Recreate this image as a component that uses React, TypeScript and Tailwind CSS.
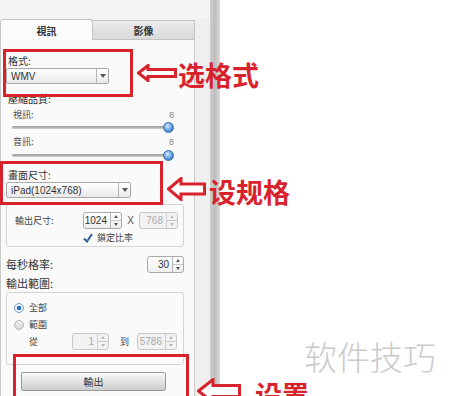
import React from "react";

const CJK = "font-['Microsoft_JhengHei','Noto_Sans_CJK_TC',sans-serif]";

function Select({ value, width }: { value: string; width: string }) {
  return (
    <div className={`flex h-[16px] ${width} items-stretch rounded-[2px] border border-[#a9a9a9] bg-gradient-to-b from-white to-[#e9e9e9]`}>
      <div className="flex flex-1 items-center pl-[4px] font-['Liberation_Sans',sans-serif] text-[10px] text-[#333]">{value}</div>
      <div className="flex w-[12px] items-center justify-center border-l border-[#b5b5b5]">
        <div className="h-0 w-0 border-x-[3px] border-t-[4px] border-x-transparent border-t-[#555]" />
      </div>
    </div>
  );
}

function Spin({ value, width, disabled }: { value: string; width: string; disabled?: boolean }) {
  const arrow = disabled ? "#bbb" : "#555";
  return (
    <div className={`flex h-[17px] ${width} items-stretch rounded-[3px] border ${disabled ? "border-[#c8c8c8] bg-[#f2f2f2]" : "border-[#a9a9a9] bg-gradient-to-b from-white to-[#efefef]"}`}>
      <div className={`flex flex-1 items-center justify-end pr-[3px] font-['Liberation_Sans',sans-serif] text-[10px] ${disabled ? "text-[#aaa]" : "text-[#333]"}`}>{value}</div>
      <div className={`flex w-[11px] flex-col border-l ${disabled ? "border-[#d0d0d0]" : "border-[#b5b5b5]"}`}>
        <div className="flex flex-1 items-center justify-center border-b border-[#c8c8c8]">
          <div className="h-0 w-0 border-x-[2.5px] border-b-[3px] border-x-transparent" style={{ borderBottomColor: arrow }} />
        </div>
        <div className="flex flex-1 items-center justify-center">
          <div className="h-0 w-0 border-x-[2.5px] border-t-[3px] border-x-transparent" style={{ borderTopColor: arrow }} />
        </div>
      </div>
    </div>
  );
}

function Slider() {
  return (
    <div className="relative ml-[6px] flex h-[10px] w-[162px] items-center">
      <div className="h-[3px] w-[156px] rounded-full bg-gradient-to-b from-[#9a9a9a] to-[#cfcfcf]" />
      <div className="absolute right-0 top-0 h-[11px] w-[11px] rounded-full border border-[#3a6ea8] bg-[radial-gradient(circle_at_40%_35%,#d6ecff_0%,#5a9be0_55%,#2c68b0_100%)]" />
    </div>
  );
}

function Arrow({ w, h, shaft }: { w: number; h: number; shaft: number }) {
  const head = Math.round(h * 0.6);
  const top = (h - shaft) / 2;
  const pts = `1.5,${h / 2} ${head},1.5 ${head},${top} ${w - 1.5},${top} ${w - 1.5},${h - top} ${head},${h - top} ${head},${h - 1.5}`;
  return (
    <svg width={w} height={h} viewBox={`0 0 ${w} ${h}`}>
      <polygon points={pts} fill="white" stroke="#d8222c" strokeWidth="3" strokeLinejoin="miter" />
    </svg>
  );
}

export default function App() {
  return (
    <div className={`relative flex h-[396px] w-[450px] overflow-hidden bg-white ${CJK}`}>
      {/* settings window */}
      <div className="flex w-[210px] flex-col bg-[#efefef]">
        <div className="h-[19px] bg-[#f4f4f4]" />
        <div className="flex h-[21px] w-[195px]">
          <div className="flex w-[93px] items-center justify-center rounded-t-[3px] border-x border-t border-[#c4c4c4] bg-[#fbfbfb] text-[10px] font-bold text-[#333]">視訊</div>
          <div className="mt-[1px] flex flex-1 items-center justify-center border-b border-r border-t border-[#c4c4c4] bg-gradient-to-b from-[#ececec] to-[#d9d9d9] text-[10px] font-bold text-[#333]">影像</div>
        </div>
        <div className="flex w-[195px] flex-1 flex-col border-x border-[#c9c9c9] bg-[#fafafa] pl-[5px]">
          <div className="mt-[14px] h-[14px] pl-[2px] text-[10px] leading-[14px] text-[#333]">格式:</div>
          <Select value="WMV" width="w-[103px]" />
          <div className="mt-[8px] h-[14px] pl-[2px] text-[10px] leading-[14px] text-[#333]">壓縮品質:</div>
          <div className="mt-[2px] flex h-[14px] w-[168px] justify-between pl-[7px] text-[9px] leading-[14px] text-[#444]">
            <span>視訊:</span>
            <span className="font-['Liberation_Sans',sans-serif] text-[#888]">8</span>
          </div>
          <Slider />
          <div className="mt-[3px] flex h-[14px] w-[168px] justify-between pl-[7px] text-[9px] leading-[14px] text-[#444]">
            <span>音訊:</span>
            <span className="font-['Liberation_Sans',sans-serif] text-[#888]">8</span>
          </div>
          <div className="mt-[1px]">
            <Slider />
          </div>
          <div className="mt-[8px] h-[14px] pl-[2px] text-[10px] leading-[14px] text-[#333]">畫面尺寸:</div>
          <Select value="iPad(1024x768)" width="w-[125px]" />

          {/* output size group */}
          <div className="mt-[6px] flex h-[43px] w-[178px] flex-col rounded-[3px] border border-[#d4d4d4] pl-[8px] pt-[7px]">
            <div className="flex items-center">
              <span className="w-[68px] text-[9px] text-[#444]">輸出尺寸:</span>
              <Spin value="1024" width="w-[39px]" />
              <span className="w-[17px] text-center font-['Liberation_Sans',sans-serif] text-[10px] text-[#555]">X</span>
              <Spin value="768" width="w-[39px]" disabled />
            </div>
            <div className="ml-[68px] mt-[2px] flex items-center gap-[4px]">
              <div className="flex h-[10px] w-[10px] items-center justify-center">
                <svg width="10" height="10" viewBox="0 0 10 10">
                  <path d="M1 5.5 L4 8.5 L9 1" fill="none" stroke="#2f5c9a" strokeWidth="2" />
                </svg>
              </div>
              <span className="text-[9px] text-[#444]">鎖定比率</span>
            </div>
          </div>

          <div className="mt-[9px] flex w-[178px] items-center justify-between">
            <span className="text-[11px] text-[#333]">每秒格率:</span>
            <Spin value="30" width="w-[37px]" />
          </div>
          <div className="mt-[3px] h-[14px] text-[11px] leading-[14px] text-[#333]">輸出範圍:</div>

          {/* range group */}
          <div className="mt-[2px] flex h-[73px] w-[178px] flex-col rounded-[3px] border border-[#d4d4d4] pl-[7px] pt-[9px]">
            <div className="flex h-[12px] items-center gap-[5px]">
              <div className="h-[10px] w-[10px] rounded-full border border-[#7a9cc6] bg-[radial-gradient(circle,#2b6cc4_0%,#2b6cc4_35%,#e8eef6_45%,#ffffff_100%)]" />
              <span className="text-[9px] text-[#444]">全部</span>
            </div>
            <div className="mt-[5px] flex h-[12px] items-center gap-[5px]">
              <div className="h-[10px] w-[10px] rounded-full border border-[#b5b5b5] bg-gradient-to-b from-[#f0f0f0] to-[#d8d8d8]" />
              <span className="text-[9px] text-[#444]">範圍</span>
            </div>
            <div className="mt-[2px] flex items-center">
              <span className="w-[58px] pl-[15px] text-[9px] text-[#444]">從</span>
              <Spin value="1" width="w-[37px]" disabled />
              <span className="w-[28px] pl-[11px] text-[9px] text-[#444]">到</span>
              <Spin value="5786" width="w-[40px]" disabled />
            </div>
          </div>

          <div className="mt-[7px] flex h-[19px] w-[145px] ml-[15px] items-center justify-center rounded-[2px] border border-[#9a9a9a] bg-gradient-to-b from-[#fafafa] to-[#cdcdcd] text-[10px] text-[#333]">
            輸出
          </div>
        </div>
      </div>
      <div className="w-[10px] bg-gradient-to-r from-[#cfcfcf] via-[#bdbdbd] to-[#dadada]" />
      <div className="flex-1 bg-white" />

      {/* annotations */}
      <div className="absolute left-[3px] top-[49px] h-[48px] w-[130px] border-[3px] border-[#d8222c]" />
      <div className="absolute left-[137px] top-[64px]">
        <Arrow w={40} h={18} shaft={7} />
      </div>
      <div className="absolute left-[178px] top-[58px] text-[27px] font-bold leading-[34px] text-[#d8222c] font-['Noto_Sans_CJK_SC',sans-serif]">选格式</div>

      <div className="absolute left-[0px] top-[161px] h-[44px] w-[163px] border-[3px] border-[#d8222c]" />
      <div className="absolute left-[167px] top-[177px]">
        <Arrow w={39} h={24} shaft={10} />
      </div>
      <div className="absolute left-[209px] top-[175px] text-[27px] font-bold leading-[34px] text-[#d8222c] font-['Noto_Sans_CJK_SC',sans-serif]">设规格</div>

      <div className="absolute left-[13px] top-[354px] h-[60px] w-[176px] border-[3px] border-[#d8222c]" />
      <div className="absolute left-[197px] top-[378px]">
        <Arrow w={44} h={26} shaft={11} />
      </div>
      <div className="absolute left-[255px] top-[378px] text-[27px] font-bold leading-[34px] text-[#d8222c] font-['Noto_Sans_CJK_SC',sans-serif]">设置</div>

      <div className="absolute left-[304px] top-[336px] text-[33px] font-light leading-[40px] text-[#cbcbcb] font-['Noto_Sans_CJK_SC',sans-serif]">软件技巧</div>
    </div>
  );
}
